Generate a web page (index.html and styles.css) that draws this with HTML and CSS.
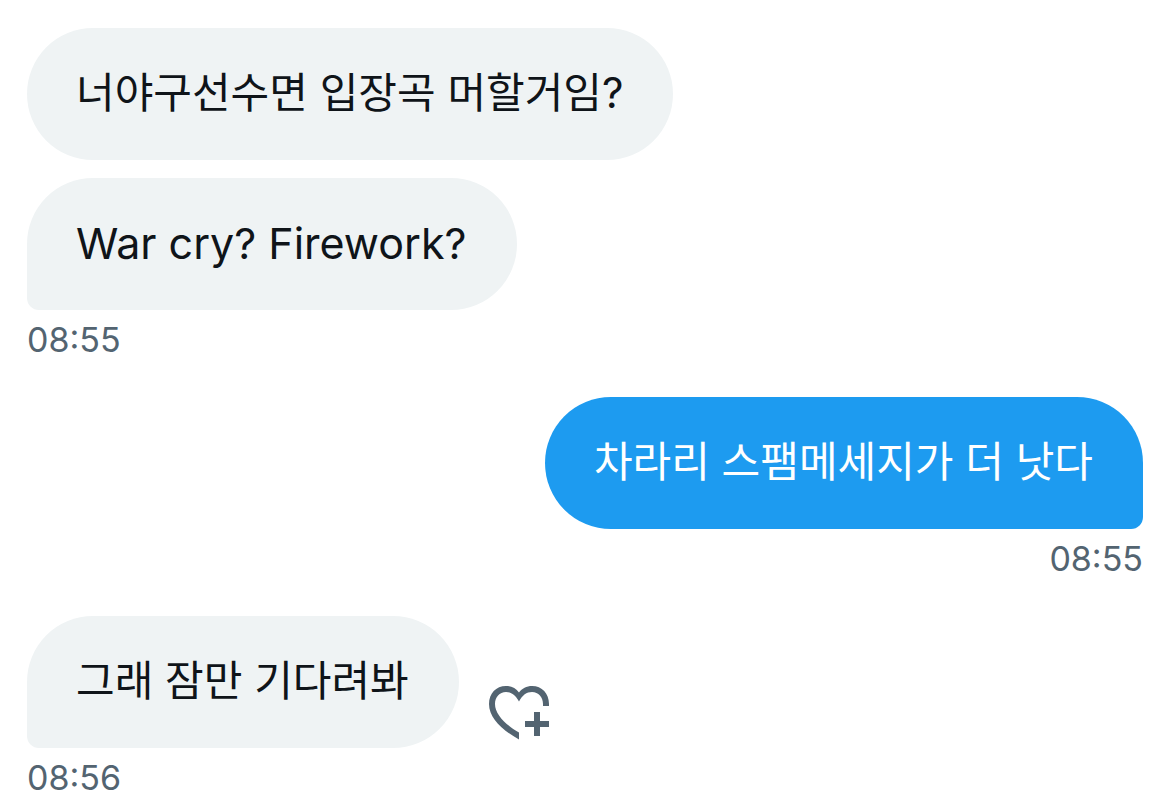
FILE: index.html
```html
<!DOCTYPE html>
<html lang="ko">
<head>
<meta charset="utf-8">
<meta name="viewport" content="width=device-width, initial-scale=1">
<title>메시지</title>
<link rel="stylesheet" href="styles.css">
</head>
<body>
<main class="chat">
  <section class="group received">
    <p class="bubble">너야구선수면 입장곡 머할거임?</p>
    <p class="bubble tail latin" lang="en">War cry? Firework?</p>
    <time class="time" datetime="08:55">08:55</time>
  </section>
  <section class="group sent">
    <p class="bubble tail">차라리 스팸메세지가 더 낫다</p>
    <time class="time" datetime="08:55">08:55</time>
  </section>
  <section class="group received">
    <div class="row">
      <p class="bubble tail">그래 잠만 기다려봐</p>
      <button class="react" type="button" aria-label="반응 추가">
        <svg class="heart" viewBox="0 0 60 54" fill="currentColor" aria-hidden="true">
          <path d="M30 53.500C13 44 0 32 0 18C0 7.500 7 0 17 0C22.500 0 27 2.500 30 6.500C33 2.500 37.500 0 43 0C53 0 60 7.500 60 18V20H54V18C54 11 49.500 6 43 6C37.500 6 33.500 9 30 15.500C26.500 9 22.500 6 17 6C10.500 6 6 11 6 18C6 28 16 38.500 30 46.500Z"/>
          <path d="M45 26h6v9h9v6h-9v9h-6v-9h-9v-6h9z"/>
        </svg>
      </button>
    </div>
    <time class="time" datetime="08:56">08:56</time>
  </section>
</main>
</body>
</html>
```
FILE: styles.css
```css
* {
  box-sizing: border-box;
}

body {
  margin: 0;
  background: #fff;
  color: #0f1419;
  font-family: Inter, "Noto Sans CJK KR", sans-serif;
}

.chat {
  display: flex;
  flex-direction: column;
  gap: 37px;
  padding: 28px 27px 8px;
}

.group {
  display: flex;
  flex-direction: column;
  align-items: flex-start;
}

.sent {
  align-items: flex-end;
}

.bubble {
  margin: 0;
  padding: 35px 50px 37px 49px;
  border-radius: 66px;
  background: #eff3f4;
  font-size: 42px;
  line-height: 60px;
}

.latin {
  font-size: 43px;
}

.bubble + .bubble {
  margin-top: 18px;
}

.received .tail {
  border-bottom-left-radius: 12px;
}

.sent .bubble {
  background: #1d9bf0;
  color: #fff;
}

.sent .tail {
  border-bottom-right-radius: 12px;
}

.time {
  margin-top: 10px;
  color: #536471;
  font-size: 34px;
  line-height: 40px;
}

.row {
  display: flex;
  align-items: flex-end;
  gap: 30px;
}

.react {
  margin: 0 0 8px;
  padding: 0;
  border: 0;
  background: none;
  color: #536471;
}

.heart {
  display: block;
  width: 60px;
  height: 54px;
}
```
